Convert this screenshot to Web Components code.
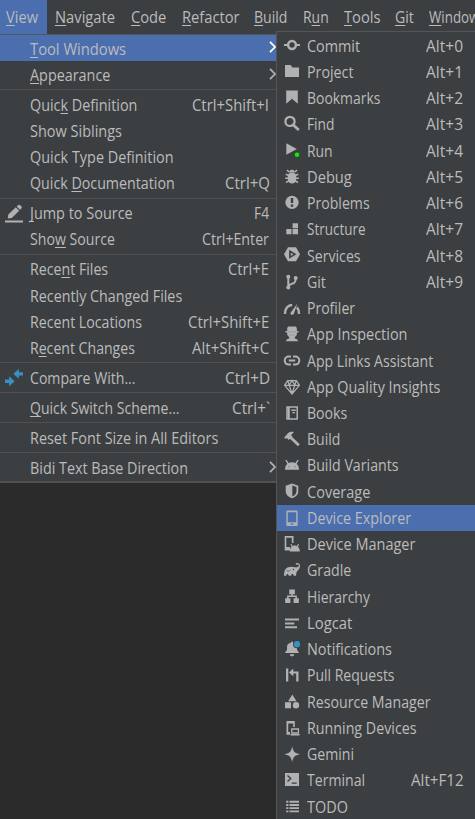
<!DOCTYPE html>
<html lang="en"><head><meta charset="utf-8"><title>View menu</title>
<style>
html,body{margin:0;height:100%;overflow:hidden;background:#2b2b2b}
body{font:15.4px "Open Sans","Noto Sans",sans-serif;color:#bbb}
</style></head><body>
<ide-screen></ide-screen>
<script>
const ICONS={
commit:'<circle r="3.9" fill="none" stroke="currentColor" stroke-width="2.5"/><path d="M-8-1h4v2h-4zM4-1h4v2h-4z"/>',
project:'<path d="M-7-6h5.5l2 2.4H7V6H-7z"/>',
bookmarks:'<path d="M-5.8-6.6H5.8V6.8L0 1.8l-5.8 5z"/>',
find:'<circle cx="-2" cy="-1.6" r="4.6" fill="none" stroke="currentColor" stroke-width="2.2"/><path d="M1.3 2l5.5 5" stroke="currentColor" stroke-width="2.7"/>',
run:'<path d="M-5.7-5.7L4.8 0l-10.5 5.7z"/><circle cx="5" cy="5.8" r="2.3" fill="#00f400"/>',
debug:'<path d="M-2.8-3.5a2.8 2.8 0 0 1 5.6 0z"/><rect x="-4.2" y="-3.2" width="8.4" height="10.6" rx="3.8"/><path d="M-3-4l-2-2M3-4l2-2M-3-.5l-3.3-1.3M3-.5l3.3-1.3M-3 2.3h-3.8M3 2.3h3.8M-3 4.6l-3 2M3 4.6l3 2" stroke="currentColor" stroke-width="1.6"/>',
problems:'<circle cy=".4" r="6.6"/><path d="M-1.2-4h2.4v5h-2.4zM-1.2 2.5h2.4v2.2h-2.4z" fill="#3c3f41"/>',
structure:'<path d="M-5.7 1h5.2v5.2h-5.2zM.6-4.8H6V.2H.6zM.6 1H6v5.2H.6z"/>',
services:'<path d="M-4-6.7h8L8 .3l-4 7h-8l-4-7z"/><path d="M-2.9-4.2L4.4 .3l-7.3 4.5z" fill="#3c3f41"/><path d="M-1.2-1.3L1.4.3l-2.6 1.6z"/>',
git:'<g fill="none" stroke="currentColor" stroke-width="2"><path d="M-3.7-3.5V6M3.7-2.5c0 4-1.5 4.5-4 5.4-2 .7-3.2 1.2-3.4 3"/></g><circle cx="-3.7" cy="-4.3" r="2"/><circle cx="3.7" cy="-3" r="2"/><circle cx="-3.7" cy="6.4" r="2"/>',
profiler:'<path d="M-7 7C-7 1-3.8-2 .2-2M7 7C7 4 6.3 2 5 .3" fill="none" stroke="currentColor" stroke-width="2.4"/><path d="M-1.6 6.1L5.4-3.4 1.8 7.1c-.6 1.4-4 .8-3.4-1z"/>',
inspect:'<path d="M-4.8-5l1-1.5h7.6l1 1.5v3H6.4V-.4H4.8V2l-2 2.3v1.2c2 .4 3.2 1.2 3.2 2.8H-6c0-1.6 1.2-2.4 3.2-2.8V4.3l-2-2.3V-.4h-1.7V-2h1.7z"/><path d="M-4-1.2h8M-3 2.2h6" stroke="#94979a" stroke-width=".8"/>',
links:'<g fill="none" stroke="currentColor" stroke-width="2"><path d="M-1-2.4h-2.3a4 4 0 0 0 0 8H-1M1-2.4h2.3a4 4 0 0 1 0 8H1M-3.2 1.6h6.4"/></g>',
quality:'<path d="M-4.3-5.5h8.6L7.4-.7 0 8-7.4-.7zM-7-.7H7M-4.3-5.5l1.5 4.8L0 7.5 2.8-.7l1.5-4.8M-2.8-.7L0-5.5 2.8-.7" fill="none" stroke="currentColor" stroke-width="1.25"/>',
books:'<path d="M-5 -5H5.2V7H-5z" fill="none" stroke="currentColor" stroke-width="1.5"/><path d="M-4.4-5h2.2V7h-2.2zM-.7-2.4h4.5V-1h-4.5zM.5.1h2.5v1.2H.5z"/>',
build:'<path d="M-7.8-.4l4-4.7C-1.5-6.5.2-6.4 2-6L-1-3.1l1.5 1.6L-3.2 2l-2-2-1.1 1z"/><path d="M-1.6-.7l8.4 8" stroke="currentColor" stroke-width="2.8"/>',
android:'<path d="M-7 5.7C-7 1.4-4.7-1.8 0-1.8S7 1.4 7 5.7z"/><path d="M-3.6.2l-2.5-4.2M3.6.2l2.5-4.2" stroke="currentColor" stroke-width="1.4"/><path d="M-3.6 2.2h1v1h-1zM2.6 2.2h1v1h-1z" fill="#63676a"/>',
coverage:'<path d="M0-6.5L6.3-4.3V1C6.3 4.5 4 7 0 8.3-4 7-6.3 4.5-6.3 1v-5.3z"/><path d="M.3-4.5l4.2 1.4V1C4.5 3.5 3 5.4.3 6.4z" fill="#3c3f41"/>',
phone:'<path fill-rule="evenodd" d="M-4.5-6.5h9q1.2 0 1.2 1.2V7.8Q5.7 9 4.5 9h-9q-1.2 0-1.2-1.2V-5.3q0-1.2 1.2-1.2zM-4.2-4.8V5.2H4.2V-4.8zM-1.3 6.5v1.2h2.6V6.5z"/>',
manager:'<path fill-rule="evenodd" d="M-7.3-7H1.5v7H-.2v-5.2h-5.5V4H-2v3.6h-5.3z"/><path d="M-2.2 8.5C-2.2 5 0 2.6 2.8 2.6s5 2.4 5 5.9z"/><path d="M.5 4.2L-1 1.3M5 4.2l1.5-2.9" stroke="currentColor" stroke-width="1.3"/>',
gradle:'<path d="M-8 6.8C-8 1.5-6.5-1-4-1.8-1.2-2.7 1.4-2.4 3.4-1.8 5-1.3 6.6-2 6.8-3.7c.1-1-1.3-1.4-2-.3L3.4-4.8C4.6-7 8.3-6.2 8-3.3 7.8-.3 6.4 1 5 2.2 4.2 3.8 4.2 5.3 3.9 6.8H1.7C1.5 4.4-.7 4.4-1 6.8h-2.2C-3.5 4.3-5.6 4.4-5.8 6.8z"/><circle cx="1.4" cy=".5" r=".7" fill="#3c3f41"/><path d="M-5.5 1.5c1.4.9 3 .5 3.9-.5" fill="none" stroke="#3c3f41" stroke-width=".6"/>',
hierarchy:'<path d="M-2.7-5.6h5.6v4.8h-5.6zM-6.8 3.3h5.2v4.8h-5.2zM1.6 3.3h5.2v4.8H1.6z"/><path d="M-4.2 4V1.2h8.4V4M0 1.2V-1" fill="none" stroke="currentColor" stroke-width="1.4"/>',
logcat:'<path d="M-7-3.4H7v2H-7zM-7 .5h9.3v2H-7zM-7 4.3H5v2H-7z"/>',
bell:'<path d="M-6.7 5v-1l1.7-2V-1C-5-3.7-3.3-4.8-1-5.3v-1H1v1C3.7-4.8 5-3.6 5-1V2l1.7 2v1zM-2.2 6.2h4.4C2.2 9-2.2 9-2.2 6.2z"/><circle cx="5" cy="-3.8" r="4" fill="#3c3f41"/><circle cx="5" cy="-3.8" r="3.1" fill="#3592c4"/>',
pull:'<path d="M-6-5.5h2.3V7.5H-6zM4.2 7.5v-8H1.3v2.8L-3-1.6l4.3-4v3h5.2V7.5z"/>',
resource:'<path d="M.3-5.6L4.5 1.2h-8.4zM-7 2.2h6v6h-6z"/><circle cx="4" cy="5.2" r="3.2"/>',
running:'<path d="M-5.5-6H2.8V0H1.2v-3.5h-5V5H-2v2.7h-3.5z"/><path d="M-.2 2h6.6v4H-.2z" fill="none" stroke="currentColor" stroke-width="1.3"/><path d="M-1.4 7h9v1.5h-9z"/>',
gemini:'<path d="M.2-6.4C1.4-1 2.6.1 8 1.3 2.6 2.5 1.4 3.6.2 9-1 3.6-2.2 2.5-7.6 1.3-2.2.1-1-1 .2-6.4z"/>',
terminal:'<path d="M-7-6H7V7H-7z"/><path d="M-4.5-3.4l3.2 3-3.2 3M-.3 4.1h5" fill="none" stroke="#3c3f41" stroke-width="1.4"/>',
todo:'<path d="M-5.8-4.2h2.2v1.9h-2.2zM-2.5-4.2H7v1.9h-9.5zM-5.8-1h2.2V.9h-2.2zM-2.5-1H7V.9h-9.5zM-5.8 2.2h2.2v1.9h-2.2zM-2.5 2.2H7v1.9h-9.5zM-5.8 5.4h2.2v1.9h-2.2zM-2.5 5.4H7v1.9h-9.5z"/>',
edit:'<path d="M-9 7.5H9v2H-9zM-6.3 5.6l.6-4L1.8-5.7 5.2-2.3-2.2 5zM2.7-6.5l1.7-1.6q.8-.6 1.6.2l1.5 1.5q.7.8 0 1.6L6-3.2z"/>',
compare:'<path fill="#3592c4" d="M9-5.7v3.3H4.8V.7L-.6-4.2 4.8-9v3.3zM-9 1.5h4.2v-3.2L.6 3.2-4.8 8.3V4.9H-9z"/>'
};
/* Text run fitted to a given width; "_" precedes the mnemonic letter. */
class FitLabel extends HTMLElement{
 connectedCallback(){
  const root=this.attachShadow({mode:'open'}),t=this.getAttribute('text');
  root.innerHTML=`<style>:host{display:block;flex:none;white-space:nowrap;width:${this.getAttribute('w')}px}span{display:inline-block;transform-origin:0 50%}u{text-decoration-thickness:1px;text-underline-offset:2px;text-decoration-skip-ink:none}</style><span>${t.replace(/_(.)/,'<u>$1</u>')}</span>`;
  const s=root.querySelector('span');
  s.style.transform=`scaleX(${(+this.getAttribute('w')+.3)/s.offsetWidth})`;
 }}
customElements.define('fit-label',FitLabel);
class MenuIcon extends HTMLElement{
 connectedCallback(){
  this.attachShadow({mode:'open'}).innerHTML=`<style>:host{display:block;flex:none;width:20px;height:20px;color:#afb1b3}svg{display:block}</style><svg width="20" height="20" viewBox="-10 -10 20 20" fill="currentColor">${ICONS[this.getAttribute('name')]||''}</svg>`;
 }}
customElements.define('menu-icon',MenuIcon);
class MenuRow extends HTMLElement{
 connectedCallback(){
  const a=n=>this.getAttribute(n);
  this.attachShadow({mode:'open'}).innerHTML=`<style>
  :host{display:flex;align-items:center;box-sizing:border-box;height:var(--row);padding:0 var(--end) 0 var(--start);line-height:20px;flex:none}
  :host([selected]){background:#4b6eaf}
  menu-icon{margin-right:var(--gap);margin-top:var(--lift)}
  fit-label{margin-top:2.4px}
  .key{margin-left:auto}
  .arrow{margin:-2px -7px 0 auto;color:#afb1b3;display:block}
  :host([selected]) .arrow{color:#fff}
  </style><menu-icon name="${a('icon')}"></menu-icon><fit-label text="${a('text')}" w="${a('w')}"></fit-label>
  ${a('key')?`<fit-label class="key" text="${a('key')}" w="${a('kw')}"></fit-label>`:''}
  ${this.hasAttribute('sub')?'<svg class="arrow" width="8" height="12" viewBox="0 0 8 12"><path d="M2 .8L7 6l-5 5.2" fill="none" stroke="currentColor" stroke-width="1.8"/></svg>':''}`;
 }}
customElements.define('menu-row',MenuRow);
class MenuSeparator extends HTMLElement{
 connectedCallback(){this.attachShadow({mode:'open'}).innerHTML='<style>:host{display:flex;align-items:center;height:3.8px;flex:none}i{height:1px;flex:1;background:#515151}</style><i></i>'}}
customElements.define('menu-separator',MenuSeparator);
class MenuPanel extends HTMLElement{
 connectedCallback(){this.attachShadow({mode:'open'}).innerHTML='<style>:host{display:flex;flex-direction:column;background:#3c3f41;box-sizing:border-box}</style><slot></slot>'}}
customElements.define('menu-panel',MenuPanel);
class MenuBar extends HTMLElement{
 connectedCallback(){
  const items=[['_View',32,47,6],['_Navigate',60,76,8],['_Code',35,51,8],['_Refactor',57,72,8],['_Build',33.5,49,8],['R_un',25,41,8],['_Tools',36,51,8],['_Git',19,34,8],['_Window',50,60,8]];
  this.attachShadow({mode:'open'}).innerHTML=`<style>:host{display:flex;height:34px;border-bottom:1px solid #555;background:#3c3f41;overflow:hidden}div{box-sizing:border-box;flex:none;line-height:20px;padding-top:8px}div:first-of-type{background:#4b6eaf}</style>`+items.map(([t,w,b,p])=>`<div style="width:${b}px;padding-left:${p}px"><fit-label text="${t}" w="${w}"></fit-label></div>`).join('');
 }}
customElements.define('menu-bar',MenuBar);
const MAIN=[['_Tool Windows',95.5,,,,'selected sub'],['_Appearance',80,,,,'sub'],0,['Quic_k Definition',107,'Ctrl+Shift+I',77],['Show Siblings',92],['Quick Type Definition',143],['Quick _Documentation',144,'Ctrl+Q',44.5],0,['_Jump to Source',102,'F4',15,'edit'],['Sho_w Source',85,'Ctrl+Enter',67],0,['Rece_nt Files',78,'Ctrl+E',41],['Recently Changed Files',152],['Recent Locations',112,'Ctrl+Shift+E',81],['R_ecent Changes',105,'Alt+Shift+C',77],0,['Compare With...',105,'Ctrl+D',44.5,'compare'],0,['_Quick Switch Scheme...',149,'Ctrl+`',37.5],0,['Reset Font Size in All Editors',188],0,['Bidi Text Base Direction',158,,,,'sub']];
const TOOLS=[['Commit',53,'Alt+0',37,'commit'],['Project',46,'Alt+1',37,'project'],['Bookmarks',73,'Alt+2',37,'bookmarks'],['Find',27.5,'Alt+3',37,'find'],['Run',25,'Alt+4',37,'run'],['Debug',44.5,'Alt+5',37,'debug'],['Problems',62,'Alt+6',37,'problems'],['Structure',58.5,'Alt+7',37,'structure'],['Services',53,'Alt+8',37,'services'],['Git',19,'Alt+9',37,'git'],['Profiler',48,,,'profiler'],['App Inspection',100,,,'inspect'],['App Links Assistant',126,,,'links'],['App Quality Insights',133,,,'quality'],['Books',40,,,'books'],['Build',33.5,,,'build'],['Build Variants',91,,,'android'],['Coverage',63,,,'coverage'],['Device Explorer',104,,,'phone','selected'],['Device Manager',108,,,'manager'],['Gradle',44,,,'gradle'],['Hierarchy',63,,,'hierarchy'],['Logcat',45,,,'logcat'],['Notifications',85,,,'bell'],['Pull Requests',87,,,'pull'],['Resource Manager',123,,,'resource'],['Running Devices',109,,,'running'],['Gemini',46.5,,,'gemini'],['Terminal',57.5,'Alt+F12',52,'terminal'],['TODO',41,,,'todo']];
const rows=l=>l.map(r=>r?`<menu-row text="${r[0]}" w="${r[1]}" ${r[2]?`key="${r[2]}" kw="${r[3]}"`:''} icon="${r[4]||''}" ${r[5]||''}></menu-row>`:'<menu-separator></menu-separator>').join('');
class IdeScreen extends HTMLElement{
 connectedCallback(){
  this.attachShadow({mode:'open'}).innerHTML=`<style>
  :host{display:block;position:relative;height:819px;overflow:hidden}
  .main{width:276px;padding-top:.3px;border-bottom:2px solid #515151;--row:26.2px;--start:4px;--end:7px;--gap:6px;--lift:0px}
  .tools{position:absolute;left:276px;top:31px;width:199px;height:800px;border:solid #555;border-width:1px 0 0 1px;padding-top:.4px;--row:26.24px;--start:5px;--end:12px;--gap:5px;--lift:-2px}
  </style><menu-bar></menu-bar><menu-panel class="main">${rows(MAIN)}</menu-panel><menu-panel class="tools">${rows(TOOLS)}</menu-panel>`;
 }}
customElements.define('ide-screen',IdeScreen);
</script></body></html>
